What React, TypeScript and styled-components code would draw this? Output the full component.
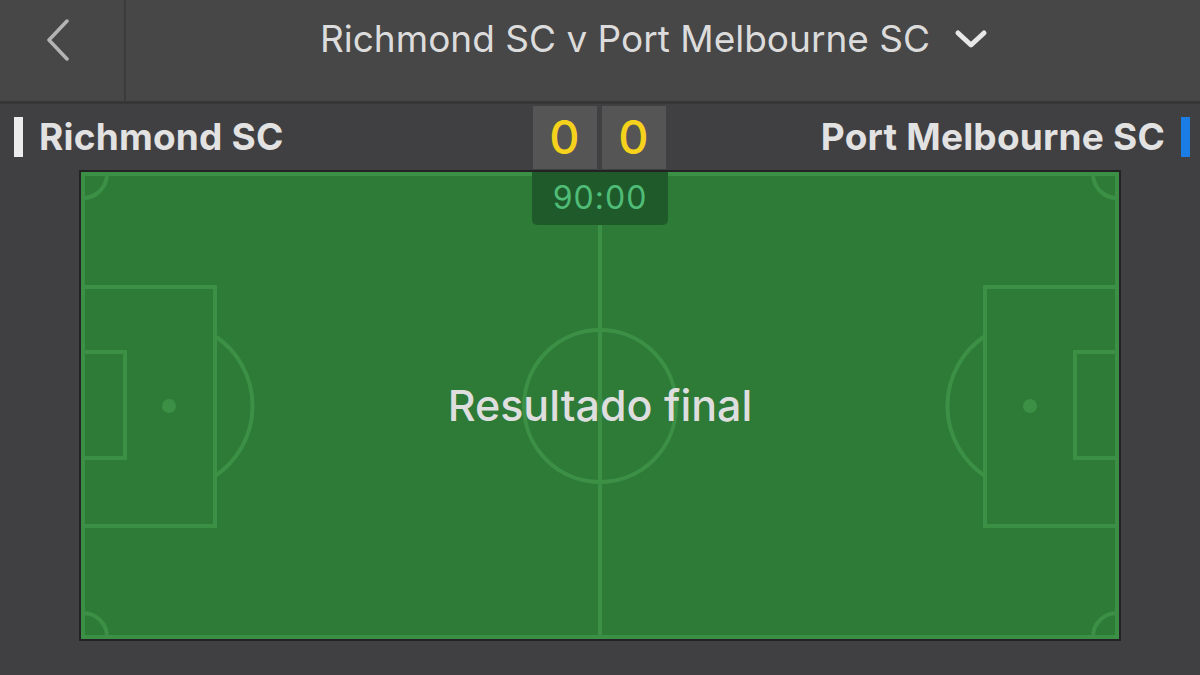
import React from "react";
import styled, { createGlobalStyle } from "styled-components";

const GlobalStyle = createGlobalStyle`
  html, body {
    margin: 0;
    padding: 0;
    background: #403f41;
    font-family: Inter, "Noto Sans", "Liberation Sans", sans-serif;
  }
  * { box-sizing: border-box; }
`;

const Screen = styled.div`
  width: 1200px;
  height: 675px;
  background: #403f41;
  overflow: hidden;
`;

const Header = styled.header`
  display: grid;
  grid-template-columns: 126px 1fr;
  height: 104px;
  background: #474747;
  border-bottom: 3px solid #363636;
`;

const BackButton = styled.button`
  display: flex;
  align-items: center;
  justify-content: center;
  padding: 0 9px 22px 0;
  margin: 0;
  border: none;
  border-right: 2px solid #3b3b3b;
  background: transparent;
  color: #b4b4b4;
`;

const TitleButton = styled.div`
  display: flex;
  align-items: center;
  justify-content: center;
  gap: 24px;
  padding: 0 18px 22px 0;
  color: #dcdcdc;
`;

const Title = styled.h1`
  margin: 0;
  font-size: 37px;
  font-weight: 400;
  letter-spacing: 0;
  line-height: 1;
  padding-bottom: 2px;
`;

const TeamRow = styled.div`
  display: grid;
  grid-template-columns: 1fr auto 1fr;
  align-items: center;
  height: 66px;
  padding: 0 12px;
`;

const Team = styled.div<{ $side: "home" | "away" }>`
  display: flex;
  align-items: center;
  gap: 16px;
  justify-content: ${(p) => (p.$side === "home" ? "flex-start" : "flex-end")};
  margin: ${(p) => (p.$side === "home" ? "0 0 0 2px" : "0 -2px 0 0")};
`;

const TeamBar = styled.span<{ $color: string }>`
  display: block;
  width: 9px;
  height: 40px;
  background: ${(p) => p.$color};
`;

const TeamName = styled.span`
  font-size: 37px;
  font-weight: 700;
  color: #e2e2e2;
  letter-spacing: 0.2px;
  padding-bottom: 2px;
`;

const Scores = styled.div`
  display: flex;
  gap: 5px;
  align-self: stretch;
  padding: 2px 0 1px;
  margin-left: -2px;
`;

const ScoreBox = styled.div`
  width: 64px;
  display: flex;
  align-items: center;
  justify-content: center;
  background: #555556;
  color: #f6d21c;
  font-size: 47px;
  font-weight: 500;
  line-height: 1;
  padding-bottom: 2px;
`;

const PitchFrame = styled.div`
  position: relative;
  width: 1042px;
  height: 471px;
  margin: 0 auto;
  border: 2px solid #232323;
  background: #2e7a37;
`;

const PitchSvg = styled.svg`
  display: block;
  width: 1038px;
  height: 467px;
`;

const Clock = styled.div`
  position: absolute;
  top: 0;
  left: 50%;
  transform: translateX(-50%);
  width: 136px;
  height: 53px;
  display: flex;
  align-items: center;
  justify-content: center;
  background: #1f5a2b;
  border-radius: 0 0 5px 5px;
  color: #4fbd78;
  font-size: 32px;
  letter-spacing: 1px;
  padding-bottom: 2px;
`;

const Status = styled.div`
  position: absolute;
  inset: 0;
  display: flex;
  align-items: center;
  justify-content: center;
  color: #dedede;
  font-size: 43px;
  font-weight: 500;
  padding-bottom: 2px;
`;

const LINE = "#3c9046";

function Pitch() {
  const w = 1038;
  const h = 467;
  const cy = 234;
  const half = w / 2;
  return (
    <PitchSvg viewBox={`0 0 ${w} ${h}`}>
      <g fill="none" stroke={LINE} strokeWidth={4}>
        <rect x={2} y={2} width={w - 4} height={h - 4} />
        <line x1={half} y1={2} x2={half} y2={h - 2} />
        <circle cx={half} cy={cy} r={76} />
        {/* left end */}
        <rect x={2} y={115} width={132} height={239} />
        <rect x={2} y={180} width={42} height={106} />
        <path d={`M134 ${cy - 70} A84 84 0 0 1 134 ${cy + 70}`} />
        {/* right end */}
        <rect x={w - 134} y={115} width={132} height={239} />
        <rect x={w - 44} y={180} width={42} height={106} />
        <path d={`M${w - 134} ${cy - 70} A84 84 0 0 0 ${w - 134} ${cy + 70}`} />
        {/* corners */}
        <path d="M2 26 A24 24 0 0 0 26 2" />
        <path d={`M${w - 26} 2 A24 24 0 0 0 ${w - 2} 26`} />
        <path d={`M2 ${h - 26} A24 24 0 0 1 26 ${h - 2}`} />
        <path d={`M${w - 26} ${h - 2} A24 24 0 0 1 ${w - 2} ${h - 26}`} />
      </g>
      <g fill={LINE}>
        <circle cx={88} cy={cy} r={7} />
        <circle cx={w - 89} cy={cy} r={7} />
        <circle cx={half} cy={cy} r={7} />
      </g>
    </PitchSvg>
  );
}

export default function App() {
  return (
    <Screen>
      <GlobalStyle />
      <Header>
        <BackButton aria-label="Back">
          <svg width="26" height="42" viewBox="0 0 26 42">
            <path d="M22 2 L4 21 L22 40" fill="none" stroke="currentColor" strokeWidth="3.5" strokeLinecap="round" strokeLinejoin="round" />
          </svg>
        </BackButton>
        <TitleButton>
          <Title>Richmond SC v Port Melbourne SC</Title>
          <svg width="34" height="21" viewBox="0 0 34 21">
            <path d="M4 4 L17 16 L30 4" fill="none" stroke="#e8e8e8" strokeWidth="5" strokeLinecap="round" strokeLinejoin="round" />
          </svg>
        </TitleButton>
      </Header>
      <TeamRow>
        <Team $side="home">
          <TeamBar $color="#ececec" />
          <TeamName>Richmond SC</TeamName>
        </Team>
        <Scores>
          <ScoreBox>0</ScoreBox>
          <ScoreBox>0</ScoreBox>
        </Scores>
        <Team $side="away">
          <TeamName>Port Melbourne SC</TeamName>
          <TeamBar $color="#1a7de6" />
        </Team>
      </TeamRow>
      <PitchFrame>
        <Pitch />
        <Status>Resultado final</Status>
        <Clock>90:00</Clock>
      </PitchFrame>
    </Screen>
  );
}
